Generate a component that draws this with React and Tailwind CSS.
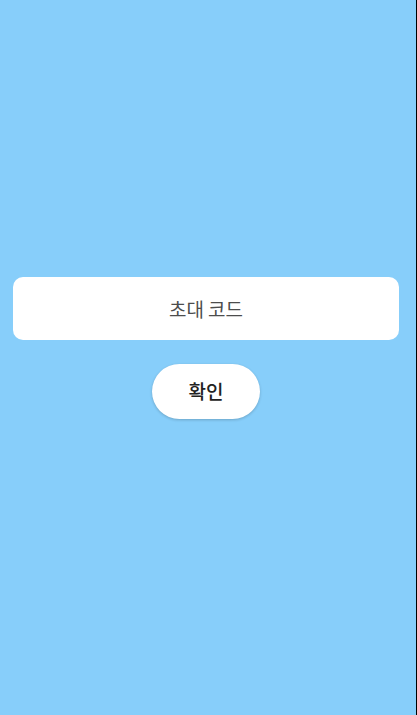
import { useState } from 'react';

export default function App() {
  const [code, setCode] = useState('');

  function handleSubmit(e) {
    e.preventDefault();
  }

  return (
    <main className="min-h-screen flex flex-col justify-center bg-[#87cefa] border-r border-black pl-[13px] pr-[17px] pb-[19px] font-['Noto_Sans_CJK_KR',sans-serif]">
      <form onSubmit={handleSubmit} className="flex flex-col items-center gap-6">
        <input
          type="text"
          aria-label="초대 코드"
          placeholder="초대 코드"
          value={code}
          onChange={(e) => setCode(e.target.value)}
          className="w-full h-[63px] rounded-[10px] bg-white text-center text-[19px] text-[#222222] placeholder:text-[#4d4d4d] outline-none"
        />
        <button
          type="submit"
          className="w-[108px] h-[55px] rounded-full bg-white text-[19px] font-medium text-[#222222] shadow-[0_1px_3px_rgba(0,0,0,0.2)]"
        >
          확인
        </button>
      </form>
    </main>
  );
}
